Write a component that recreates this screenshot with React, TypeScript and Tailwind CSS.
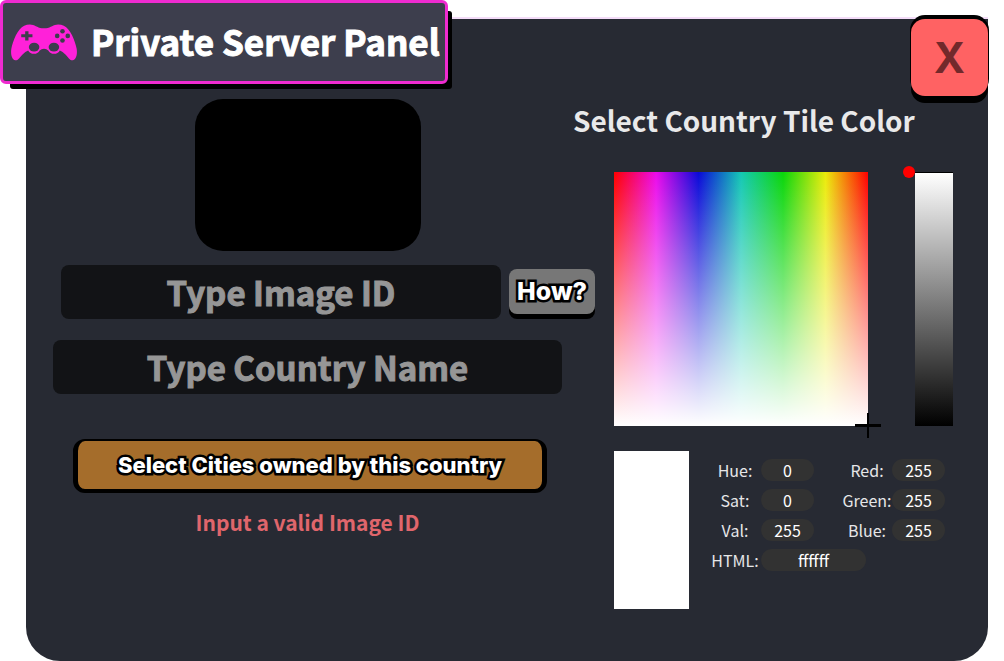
const sans = "font-['Noto_Sans_CJK_SC','Noto_Sans',sans-serif]"
const outlined =
  "font-['Inter',sans-serif] font-extrabold text-white [-webkit-text-stroke:5px_#000] [paint-order:stroke_fill]"
const heavy = 'font-bold [-webkit-text-stroke-width:1px]'

const fields = [
  { id: 'hue', label: 'Hue:', value: '0' },
  { id: 'red', label: 'Red:', value: '255' },
  { id: 'sat', label: 'Sat:', value: '0' },
  { id: 'green', label: 'Green:', value: '255' },
  { id: 'val', label: 'Val:', value: '255' },
  { id: 'blue', label: 'Blue:', value: '255' },
]

const GamepadIcon = () => (
  <svg viewBox="30 70 200 112" className="h-[37px] w-[66px] shrink-0" aria-hidden="true">
    <path
      fill="#ff21d9"
      d="M70 75Q80 71 92 72C106 74 112 83 130 83C148 83 154 74 168 72Q180 71 190 75C210 84 224 120 229 145C232 165 226 178 217 180C209 181 203 170 195 162C189 156 184 153 178 150A20 20 0 0 1 143 150Q138 145 130 145Q122 145 117 150A20 20 0 0 1 82 150C76 153 71 156 65 162C57 170 51 181 43 180C34 178 28 165 31 145C36 120 50 84 70 75Z"
    />
    <g fill="#3d3e4d">
      <path d="M73 92h10v9h12v9H83v10H73v-10H61v-9h12z" />
      <circle cx="186" cy="92" r="7" />
      <circle cx="170" cy="106" r="7" />
      <circle cx="202" cy="106" r="7" />
      <circle cx="186" cy="120" r="7" />
      <ellipse cx="100" cy="140" rx="16" ry="13" />
      <ellipse cx="160" cy="140" rx="16" ry="13" />
    </g>
  </svg>
)

const Field = ({ id, label, value, wide = false }) => (
  <>
    <label htmlFor={id} className="w-[50px] text-center text-base leading-[22px] whitespace-nowrap text-[#e6e6e8]">
      {label}
    </label>
    <input
      id={id}
      defaultValue={value}
      className={`h-[22px] rounded-full bg-[#323232] text-center text-base leading-[22px] text-white outline-none ${
        wide ? 'col-span-2 w-[105px]' : 'w-[53px]'
      }`}
    />
  </>
)

const CountryForm = () => (
  <section className="flex min-w-0 flex-1 flex-col items-center pt-20 pr-[11px] pl-[27px]">
    <div className="h-[152px] w-[226px] rounded-[28px] bg-black" />
    <div className="mt-[14px] -mr-[33px] flex items-start gap-2 self-stretch pl-2">
      <input
        aria-label="Image ID"
        placeholder="Type Image ID"
        className={`h-[54px] min-w-0 flex-1 rounded-lg bg-[#121316] text-center text-[33px] text-white outline-none placeholder:text-[#969696] ${heavy}`}
      />
      <button
        type="button"
        className={`mt-1 h-[45px] w-[86px] rounded-lg bg-[#777] text-[25px] shadow-[0_5px_0_#000] ${outlined}`}
      >
        How?
      </button>
    </div>
    <input
      aria-label="Country name"
      placeholder="Type Country Name"
      className={`mt-[21px] h-[54px] min-w-0 self-stretch rounded-lg bg-[#121316] text-center text-[33px] text-white outline-none placeholder:text-[#969696] ${heavy}`}
    />
    <div className="mt-[45px] self-stretch pr-[15px] pl-5">
      <button
        type="button"
        className={`h-[54px] w-full rounded-xl border-x-[5px] border-t-2 border-b-4 border-black bg-[#a56d2b] text-[22px] whitespace-nowrap ${outlined}`}
      >
        Select Cities owned by this country
      </button>
    </div>
    <p className="mt-[14px] text-[21px] leading-[30px] font-bold text-[#e0666c]">Input a valid Image ID</p>
  </section>
)

const ColorPicker = () => (
  <section className="w-[415px] shrink-0 pt-20">
    <h2 className="text-[28px] leading-[42px] font-bold whitespace-nowrap text-[#e9e9ea]">
      Select Country Tile Color
    </h2>
    <div className="mt-[31px] ml-[41px] flex gap-[47px]">
      <div className="relative h-[254px] w-[254px] bg-[linear-gradient(to_bottom,transparent,#fff),linear-gradient(to_right,#ff0000,#eb0aeb_16.6%,#0a0ad8_33.3%,#14c8b4_50%,#0ad60a_66.6%,#ebeb0a_83.3%,#ff0000)]">
        <span className="absolute -right-[13px] -bottom-px h-[3px] w-[26px] bg-black" />
        <span className="absolute -right-px -bottom-3 h-[25px] w-[2px] bg-black" />
      </div>
      <div className="relative">
        <input
          type="range"
          aria-label="Brightness"
          min={0}
          max={255}
          defaultValue={255}
          className="block h-[254px] w-[38px] appearance-none border-t border-black bg-[linear-gradient(to_bottom,#fff,#000)] [writing-mode:vertical-lr] [&::-webkit-slider-thumb]:opacity-0"
        />
        <span className="pointer-events-none absolute -top-[6px] -left-3 size-3 rounded-full bg-[#ff0000]" />
      </div>
    </div>
    <div className="mt-[25px] ml-[41px] flex items-start gap-[21px]">
      <div className="h-[158px] w-[75px] bg-white" />
      <div className="mt-2 grid auto-rows-[22px] grid-cols-[51px_81px_50px_53px] gap-y-2">
        {fields.map((field) => (
          <Field key={field.id} {...field} />
        ))}
        <Field id="html" label="HTML:" value="ffffff" wide />
      </div>
    </div>
  </section>
)

const App = () => {
  return (
    <div className={`relative flex min-h-screen bg-white pt-[17px] pr-4 pl-[26px] ${sans}`}>
      <main className="relative flex min-w-0 flex-1 rounded-b-[34px] border-t-2 border-[#f3dcf8] bg-[#272a33]">
        <CountryForm />
        <ColorPicker />
        <button
          type="button"
          aria-label="Close"
          className="absolute top-0 right-0 size-[77px] rounded-[14px] bg-[#ff6263] font-['Inter',sans-serif] text-[42px] font-bold text-[#73292b] shadow-[0_-3px_0_1px_#000,0_7px_0_#000]"
        >
          X
        </button>
      </main>
      <header className="absolute top-0 left-0 flex h-[84px] items-center gap-[14px] rounded-md border-[3px] border-[#ef2bd0] bg-[#3d3e4d] pr-[5px] pl-2 shadow-[7px_8px_0_-3px_#000]">
        <GamepadIcon />
        <h1 className={`pb-[2px] text-[35px] leading-[52px] whitespace-nowrap text-white ${heavy}`}>
          Private Server Panel
        </h1>
      </header>
    </div>
  )
}

export default App
